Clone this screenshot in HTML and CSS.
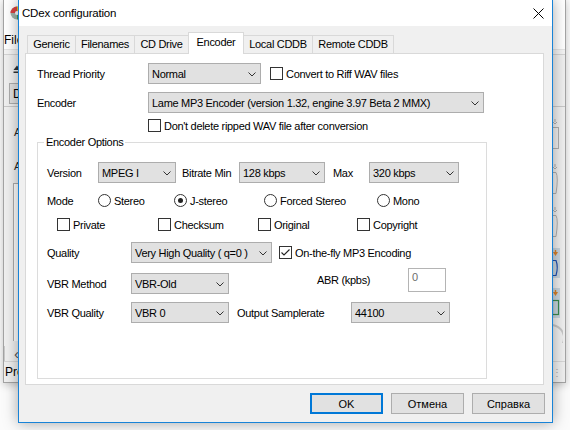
FILE: index.html
```html
<!DOCTYPE html>
<html>
<head>
<meta charset="utf-8">
<title>CDex configuration</title>
<link rel="stylesheet" href="styles.css">
</head>
<body>
<div class="desktop">
  <div class="app">
    <div class="app-title">
      <svg class="app-icon" width="14" height="14" viewBox="0 0 14 14"><circle cx="7" cy="7" r="6.5" fill="#9fb3a8"/><path d="M7 7 L7 0.5 A6.5 6.5 0 0 1 13.5 7 Z" fill="#e8d21d"/><path d="M7 7 L13.5 7 A6.5 6.5 0 0 1 7 13.5 Z" fill="#3aa655"/><path d="M7 7 L0.5 7 A6.5 6.5 0 0 1 7 0.5 Z" fill="#d94040"/><circle cx="7" cy="7" r="2" fill="#fff"/></svg>
    </div>
    <div class="app-menu"><span>File</span></div>
    <div class="app-sep"></div>
    <div class="app-toolbar">
      <svg width="8" height="9" viewBox="0 0 8 9"><path d="M4 0.5 L7.5 5 L0.5 5 Z" fill="#333"/><rect x="0.5" y="6.5" width="7" height="1.5" fill="#333"/></svg>
    </div>
    <div class="app-bar2"><span class="app-dbtn">D</span></div>
    <div class="app-main">
      <div class="app-left">
        <div class="app-lbl">Artist</div>
        <div class="app-lbl app-lbl2">Album</div>
        <div class="app-list"></div>
      </div>
      <div class="app-right">
        <svg width="12" height="236" viewBox="0 0 12 236">
          <g fill="none" stroke="#b0b0b0">
            <path d="M4 12 L4 15 M2 15 L4 17 L6 15"/>
            <rect x="1.5" y="20.5" width="6" height="21"/>
            <path d="M4 57 L4 60 M2 60 L4 62 L6 60"/>
            <path d="M1.5 65.5 L5 65.5 Q7.5 70 5 86.5 L1.5 86.5"/>
            <path d="M4 100 L4 103 M2 103 L4 105 L6 103"/>
            <path d="M1.5 108.5 L5 108.5 Q7.5 113 5 129.5 L1.5 129.5"/>
          </g>
          <rect x="0" y="141" width="9" height="30" fill="#c9d6df"/>
          <path d="M2 145 L7 145 L4.5 149 Z" fill="#d9822b"/>
          <rect x="3.8" y="143" width="1.4" height="3" fill="#d9822b"/>
          <path d="M1.5 153.5 L5 153.5 Q7.5 160 5 168.5 L1.5 168.5" fill="none" stroke="#1f4fb0" stroke-width="1.2"/>
          <rect x="0" y="181" width="9" height="30" fill="#c9d6df"/>
          <path d="M2 185 L7 185 L4.5 189 Z" fill="#d9822b"/>
          <rect x="3.8" y="183" width="1.4" height="3" fill="#d9822b"/>
          <rect x="1.5" y="193.5" width="6" height="14" fill="none" stroke="#3a8a50" stroke-width="1.2"/>
          <path d="M0 218 A12 12 0 0 1 0 244" fill="none" stroke="#c7c7c7" stroke-width="2"/>
        </svg>
      </div>
    </div>
    <div class="app-scroll"><span>&#8249;</span></div>
    <div class="app-status"><span>Progress</span><span class="app-grip">&#8942;</span></div>
  </div>

  <div class="dialog">
    <div class="titlebar">
      <span class="title">CDex configuration</span>
      <svg class="close" width="11" height="11" viewBox="0 0 11 11"><path d="M0.5 0.5 L10.5 10.5 M10.5 0.5 L0.5 10.5" stroke="#000" stroke-width="1"/></svg>
    </div>
    <div class="dbody">
      <div class="tabs">
        <div class="tab t1">Generic</div>
        <div class="tab t2">Filenames</div>
        <div class="tab t3">CD Drive</div>
        <div class="tab t4 sel-tab">Encoder</div>
        <div class="tab t5">Local CDDB</div>
        <div class="tab t6">Remote CDDB</div>
      </div>
      <div class="panel">
        <div class="row r1">
          <span class="lbl w111 ml11">Thread Priority</span>
          <div class="combo w113"><span>Normal</span><svg class="chev" width="8" height="5" viewBox="0 0 8 5"><polyline points="0.5,0.5 4,4 7.5,0.5" fill="none" stroke="#333"/></svg></div>
          <span class="cb ml9"></span><span class="ct">Convert to Riff WAV files</span>
        </div>
        <div class="row r2">
          <span class="lbl w111 ml11">Encoder</span>
          <div class="combo w336"><span>Lame MP3 Encoder (version 1.32, engine 3.97 Beta 2 MMX)</span><svg class="chev" width="8" height="5" viewBox="0 0 8 5"><polyline points="0.5,0.5 4,4 7.5,0.5" fill="none" stroke="#333"/></svg></div>
        </div>
        <div class="row r3">
          <span class="cb ml122"></span><span class="ct">Don't delete ripped WAV file after conversion</span>
        </div>

        <div class="group">
          <div class="legend">Encoder Options</div>
          <div class="row g1">
            <span class="lbl w51 ml9">Version</span>
            <div class="combo w78"><span>MPEG I</span><svg class="chev" width="8" height="5" viewBox="0 0 8 5"><polyline points="0.5,0.5 4,4 7.5,0.5" fill="none" stroke="#333"/></svg></div>
            <span class="lbl w57 ml6">Bitrate Min</span>
            <div class="combo w86"><span>128 kbps</span><svg class="chev" width="8" height="5" viewBox="0 0 8 5"><polyline points="0.5,0.5 4,4 7.5,0.5" fill="none" stroke="#333"/></svg></div>
            <span class="lbl w36 ml8">Max</span>
            <div class="combo w90"><span>320 kbps</span><svg class="chev" width="8" height="5" viewBox="0 0 8 5"><polyline points="0.5,0.5 4,4 7.5,0.5" fill="none" stroke="#333"/></svg></div>
          </div>
          <div class="row g2">
            <span class="lbl w51 ml9">Mode</span>
            <span class="item w76"><span class="rb"></span><span class="ct">Stereo</span></span>
            <span class="item w90"><span class="rb on"></span><span class="ct">J-stereo</span></span>
            <span class="item w113"><span class="rb"></span><span class="ct">Forced Stereo</span></span>
            <span class="item"><span class="rb"></span><span class="ct">Mono</span></span>
          </div>
          <div class="row g3">
            <span class="item w101 ml19"><span class="cb"></span><span class="ct">Private</span></span>
            <span class="item w100"><span class="cb"></span><span class="ct">Checksum</span></span>
            <span class="item w99"><span class="cb"></span><span class="ct">Original</span></span>
            <span class="item"><span class="cb"></span><span class="ct">Copyright</span></span>
          </div>
          <div class="row g4">
            <span class="lbl w84 ml9">Quality</span>
            <div class="combo w141"><span>Very High Quality ( q=0 )</span><svg class="chev" width="8" height="5" viewBox="0 0 8 5"><polyline points="0.5,0.5 4,4 7.5,0.5" fill="none" stroke="#333"/></svg></div>
            <span class="cb ml7"><svg width="11" height="11" viewBox="0 0 11 11"><polyline points="1.5,5.5 4,8 9.5,2.5" fill="none" stroke="#222" stroke-width="1.1"/></svg></span><span class="ct">On-the-fly MP3 Encoding</span>
          </div>
          <div class="row g5">
            <span class="lbl w84 ml9">VBR Method</span>
            <div class="combo w98"><span>VBR-Old</span><svg class="chev" width="8" height="5" viewBox="0 0 8 5"><polyline points="0.5,0.5 4,4 7.5,0.5" fill="none" stroke="#333"/></svg></div>
            <span class="lbl w91 ml88 up3">ABR (kpbs)</span>
            <div class="edit">0</div>
          </div>
          <div class="row g6">
            <span class="lbl w84 ml9">VBR Quality</span>
            <div class="combo w98"><span>VBR 0</span><svg class="chev" width="8" height="5" viewBox="0 0 8 5"><polyline points="0.5,0.5 4,4 7.5,0.5" fill="none" stroke="#333"/></svg></div>
            <span class="lbl w114 ml8">Output Samplerate</span>
            <div class="combo w99"><span>44100</span><svg class="chev" width="8" height="5" viewBox="0 0 8 5"><polyline points="0.5,0.5 4,4 7.5,0.5" fill="none" stroke="#333"/></svg></div>
          </div>
        </div>
      </div>
      <div class="buttons">
        <div class="btn default">OK</div>
        <div class="btn">Отмена</div>
        <div class="btn">Справка</div>
      </div>
    </div>
  </div>
</div>
</body>
</html>
```

FILE: styles.css
```css
* { box-sizing: border-box; }
html, body { margin: 0; padding: 0; }
body {
  width: 570px; height: 430px; overflow: hidden;
  background: #fbfbfb;
  font-family: "Liberation Sans", Arial, sans-serif;
  font-size: 11px; color: #000;
}
.desktop { position: relative; width: 570px; height: 430px; overflow: hidden; background: #fbfbfb; }

/* background application window */
.app {
  position: absolute; left: 3px; top: -1px; width: 563px; height: 384px;
  border: 1px solid #a4a4a4; background: #f0f0f0;
  box-shadow: 0 2px 8px rgba(0,0,0,.22);
  display: flex; flex-direction: column;
  font-size: 12px; color: #000;
}
.app-title { height: 27px; background: #fff; display: flex; align-items: center; padding-left: 6px; }
.app-menu { height: 25px; background: #fff; display: flex; align-items: center; padding-top: 6px; }
.app-sep { height: 6px; border-top: 1px solid #e6e6e6; border-bottom: 1px solid #d4d4d4; background: #f4f4f4; }
.app-toolbar { height: 27px; display: flex; align-items: center; padding-left: 9px; padding-top: 4px; }
.app-bar2 { height: 27px; display: flex; align-items: center; padding-left: 5px; }
.app-dbtn { width: 26px; height: 21px; border: 1px solid #adadad; background: #e1e1e1; display: flex; align-items: center; padding-left: 3px; }
.app-main { flex: 1; display: flex; border-top: 1px solid #c9c9c9; }
.app-left { width: 200px; padding: 19px 0 0 10px; color: #222; }
.app-lbl { height: 13px; line-height: 13px; font-size: 11px; }
.app-lbl2 { margin-top: 21px; }
.app-list { margin-top: 10px; margin-left: -1px; height: 158px; border: 1px solid #adadad; border-bottom: none; background: #fff; }
.app-right { margin-left: auto; width: 14px; padding-top: 0; }
.app-scroll { height: 15px; display: flex; align-items: center; padding-left: 9px; font-size: 15px; color: #555; background: #f0f0f0; border-left: 1px solid #c9c9c9; }
.app-status { height: 22px; border-top: 1px solid #d7d7d7; display: flex; align-items: center; padding-left: 1px; }
.app-grip { margin-left: auto; margin-right: 3px; color: #aaa; font-size: 10px; }

/* dialog */
.dialog {
  position: absolute; left: 18px; top: -1px; width: 535px; height: 424px;
  border: 1px solid #1883d7; background: #f0f0f0;
  box-shadow: 0 0 14px rgba(0,0,0,.35);
  display: flex; flex-direction: column;
}
.titlebar { height: 26px; background: #fff; display: flex; align-items: center; padding-left: 3px; }
.title { font-size: 11.5px; letter-spacing: -0.2px; }
.close { margin-left: auto; margin-right: 8px; }
.dbody { padding: 6px 0 0 6px; display: flex; flex-direction: column; }

.tabs { display: flex; align-items: flex-end; height: 21px; margin-left: 2px; letter-spacing: -0.3px; }
.tab {
  height: 18px; border: 1px solid #d9d9d9; border-bottom: none;
  margin-right: -1px; background: #f0f0f0;
  display: flex; align-items: center; justify-content: center; padding-bottom: 1px;
}
.sel-tab { height: 22px; margin-bottom: -1px; background: #fff; position: relative; z-index: 1; padding-bottom: 3px; }
.t1 { width: 49px; } .t2 { width: 60px; } .t3 { width: 55px; }
.t4 { width: 56px; } .t5 { width: 70px; } .t6 { width: 82px; }

.panel { width: 519px; height: 332px; border: 1px solid #d9d9d9; background: #fff; letter-spacing: -0.3px; }

.row { display: flex; align-items: center; }
.r1 { margin-top: 9px; height: 21px; }
.r2 { margin-top: 8px; height: 21px; }
.r3 { margin-top: 6px; height: 13px; }

.lbl { display: flex; align-items: center; height: 21px; white-space: nowrap; flex: none; }
.up3 { margin-top: -4px; }

.combo {
  height: 21px; border: 1px solid #adadad; background: #e1e1e1;
  display: flex; align-items: center; padding-left: 3px; flex: none; white-space: nowrap; overflow: hidden;
}
.combo span { flex: 1; }
.chev { flex: none; margin-right: 4px; margin-top: 1px; }

.cb { width: 13px; height: 13px; border: 1px solid #333; background: #fff; flex: none; display: block; }
.cb svg { display: block; }
.rb { width: 13px; height: 13px; border: 1px solid #333; border-radius: 50%; background: #fff; flex: none; display: flex; align-items: center; justify-content: center; }
.rb.on::after { content: ""; width: 5px; height: 5px; border-radius: 50%; background: #222; }
.ct { margin-left: 3px; white-space: nowrap; }
.item { display: flex; align-items: center; flex: none; }

.group { margin-top: 10px; margin-left: 11px; width: 450px; height: 237px; border: 1px solid #dcdcdc; }
.legend { margin: -7px 0 0 6px; padding: 0 2px; height: 13px; line-height: 13px; background: #fff; width: fit-content; }
.g1 { margin-top: 13px; height: 21px; }
.g2 { margin-top: 11px; height: 13px; }
.g3 { margin-top: 11px; height: 13px; }
.g4 { margin-top: 11px; height: 21px; }
.g5 { margin-top: 10px; height: 21px; align-items: flex-start; }
.g6 { margin-top: 8px; height: 21px; }

.edit { width: 38px; height: 24px; margin-top: -5px; border: 1px solid #b4b4b4; background: #fff; color: #6d6d6d; padding: 2px 0 0 3px; line-height: 13px; flex: none; }

.ml6 { margin-left: 6px; } .ml7 { margin-left: 7px; } .ml8 { margin-left: 8px; } .ml9 { margin-left: 9px; }
.ml11 { margin-left: 11px; } .ml19 { margin-left: 19px; } .ml88 { margin-left: 88px; } .ml122 { margin-left: 122px; }
.w36 { width: 36px; } .w51 { width: 51px; } .w57 { width: 57px; } .w76 { width: 76px; } .w78 { width: 78px; }
.w84 { width: 84px; } .w86 { width: 86px; } .w90 { width: 90px; } .w91 { width: 91px; } .w98 { width: 98px; }
.w99 { width: 99px; } .w100 { width: 100px; } .w101 { width: 101px; } .w111 { width: 111px; } .w113 { width: 113px; }
.w114 { width: 114px; } .w141 { width: 141px; } .w336 { width: 336px; }

.buttons { display: flex; justify-content: flex-end; gap: 8px; margin-top: 8px; padding-right: 7px; }
.btn { width: 73px; height: 21px; border: 1px solid #adadad; background: #e1e1e1; display: flex; align-items: center; justify-content: center; }
.btn.default { border: 2px solid #0078d7; }
```
